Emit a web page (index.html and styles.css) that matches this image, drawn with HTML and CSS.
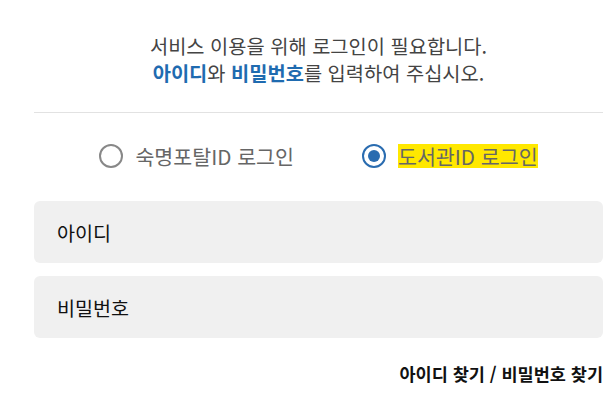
FILE: index.html
```html
<!DOCTYPE html>
<html lang="ko">
<head>
    <meta charset="UTF-8">
    <meta name="viewport" content="width=device-width, initial-scale=1.0">
    <title>로그인</title>
    <link rel="stylesheet" href="styles.css">
</head>
<body>
    <div class="login-box">
        <p class="notice">
            서비스 이용을 위해 로그인이 필요합니다.<br>
            <strong>아이디</strong>와 <strong>비밀번호</strong>를 입력하여 주십시오.
        </p>

        <div class="login-type">
            <label class="radio">
                <input type="radio" name="type" value="portal">
                <span class="mark"></span>
                <span class="text">숙명포탈ID 로그인</span>
            </label>
            <label class="radio">
                <input type="radio" name="type" value="library" checked>
                <span class="mark"></span>
                <span class="text">도서관ID 로그인</span>
            </label>
        </div>

        <div class="fields">
            <input type="text" class="field" placeholder="아이디">
            <input type="password" class="field" placeholder="비밀번호">
        </div>

        <div class="find">
            <a href="#">아이디 찾기</a> / <a href="#">비밀번호 찾기</a>
        </div>
    </div>
</body>
</html>
```

FILE: styles.css
```css
body {
    margin: 0;
    font-family: "Noto Sans CJK KR", "Noto Sans", sans-serif;
    background: #fff;
}
.login-box {
    width: 569px;
    margin-left: 34px;
}
.notice {
    margin: 0;
    padding: 32px 0 26px;
    text-align: center;
    font-size: 19.8px;
    line-height: 27px;
    color: #444;
    border-bottom: 1px solid #e2e2e2;
}
.notice strong {
    color: #1f6bb0;
    font-weight: 700;
}
.login-type {
    display: flex;
    justify-content: center;
    gap: 68px;
    padding: 30px 0 0;
    height: 26px;
}
.radio {
    display: flex;
    align-items: center;
    gap: 12px;
    cursor: pointer;
}
.radio input {
    display: none;
}
.radio .mark {
    width: 20px;
    height: 20px;
    border: 2.5px solid #888;
    border-radius: 50%;
    position: relative;
}
.radio input:checked + .mark {
    border-color: #2a6cb0;
}
.radio input:checked + .mark::after {
    content: "";
    position: absolute;
    left: 4px;
    top: 4px;
    width: 12px;
    height: 12px;
    border-radius: 50%;
    background: #2a6cb0;
}
.radio .text {
    font-size: 20.6px;
    line-height: 24px;
    color: #666;
}
.radio input:checked ~ .text {
    background: #ffe800;
}
.fields {
    display: flex;
    flex-direction: column;
    gap: 13px;
    margin-top: 32px;
}
.field {
    height: 62px;
    border: none;
    border-radius: 6px;
    background: #f0f0f0;
    padding: 0 23px;
    font-family: inherit;
    font-size: 19.6px;
    color: #111;
    outline: none;
}
.field::placeholder {
    color: #111;
}
.find {
    margin-top: 24px;
    text-align: right;
    font-size: 17.5px;
    line-height: 24px;
    font-weight: 700;
    color: #111;
}
.find a {
    color: #111;
    text-decoration: none;
}
```
